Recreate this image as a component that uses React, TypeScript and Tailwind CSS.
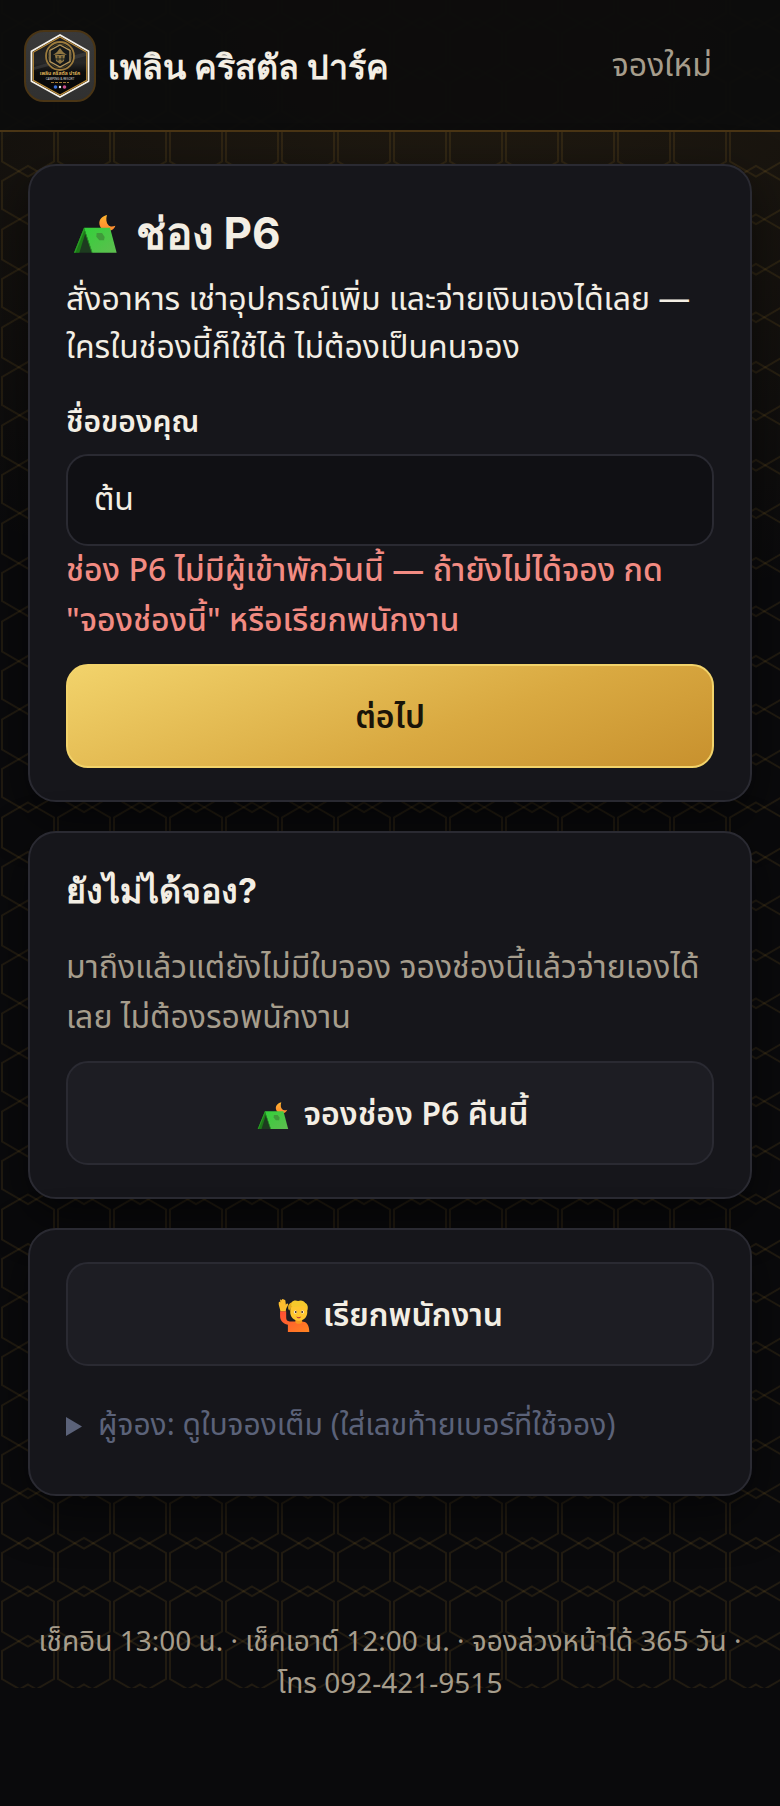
import { useState } from "react";
import type { ReactNode } from "react";

const BODY_FONT = "font-['Noto_Sans_Thai','Noto_Sans',sans-serif]";
const HEAD_FONT = "font-['Inter','Noto_Sans',sans-serif]";

/* ── พื้นหลังลายรังผึ้ง ── */
function HexBackground() {
  return (
    <div
      aria-hidden="true"
      className="absolute inset-x-0 top-0 h-[1688px] overflow-hidden bg-[radial-gradient(120%_620px_at_60%_0px,rgba(205,150,50,0.13),transparent)]"
    >
      <svg className="w-full h-full" fill="none">
        <defs>
          <pattern id="hex" width="56" height="98" patternUnits="userSpaceOnUse">
            <g transform="scale(2)" stroke="#c8922e" strokeOpacity="0.12">
              <path d="M14 9.25l13 7.5v15l-13 7.5-13-7.5v-15z" />
              <path d="M1 50v-8.5l13-7.5 13 7.5V50" />
              <path d="M1-1v7.5L14 14l13-7.5V-1" />
            </g>
          </pattern>
        </defs>
        <rect width="100%" height="100%" fill="url(#hex)" />
      </svg>
    </div>
  );
}

/* ── โลโก้ ── */
function Logo() {
  return (
    <svg viewBox="0 0 72 72" className="w-18 h-18 shrink-0" aria-hidden="true">
      <defs>
        <linearGradient id="logoBg" x1="0" y1="0" x2="0" y2="1">
          <stop offset="0" stopColor="#3a3a3a" />
          <stop offset="1" stopColor="#303030" />
        </linearGradient>
        <linearGradient id="logoHex" x1="0" y1="0" x2="0" y2="1">
          <stop offset="0" stopColor="#1c1c1c" />
          <stop offset="0.45" stopColor="#262626" />
          <stop offset="0.6" stopColor="#0c0c0c" />
          <stop offset="1" stopColor="#050505" />
        </linearGradient>
      </defs>
      <rect x="1" y="1" width="70" height="70" rx="19" fill="url(#logoBg)" stroke="#4a3515" strokeWidth="2" />
      <path d="M36 5l28.5 16.3v30L36 67 7.5 51.3v-30z" fill="url(#logoHex)" stroke="#f7f3ea" strokeWidth="1.8" strokeLinejoin="round" />
      <path d="M36 7l26.7 15.3v28L36 65 9.3 50.3v-28z" fill="none" stroke="#b98a38" strokeWidth="1.2" />
      <path d="M10 37L62 22v4L10 40z" fill="#5a5a5a" opacity="0.35" />
      <circle cx="36" cy="26" r="14" fill="#14181a" stroke="#9b7a3c" strokeWidth="1.8" />
      <circle cx="36" cy="26" r="11.8" fill="none" stroke="#5c4f30" strokeWidth="0.8" />
      <path d="M36 15l10 5.5v11L36 37l-10-5.5v-11z" fill="none" stroke="#b6965a" strokeWidth="1.3" />
      <path d="M36 18l3 4 4 3-7-1-7 1 4-3zM31 25h10l-1 6-4 3-4-3z" fill="#8f7642" />
      <path d="M34 26v5M38 26v5M30 29h12" stroke="#1b2220" strokeWidth="1" />
      <text x="36" y="45" textAnchor="middle" fontSize="5" fontWeight="700" fill="#d9ac55">เพลิน คริสตัล ปาร์ค</text>
      <text x="36" y="50" textAnchor="middle" fontSize="3" fill="#d8d8d8">CAMPING &amp; RESORT</text>
      <path d="M27 52.5h18" stroke="#a07a38" strokeWidth="1" strokeDasharray="3 1" />
      <circle cx="31.5" cy="57" r="1.8" fill="#3b6fd6" />
      <circle cx="36" cy="57" r="1.2" fill="#e8e8e8" />
      <circle cx="40.5" cy="57" r="1.8" fill="#c9508c" />
    </svg>
  );
}

function TentIcon({ className }: { className: string }) {
  return (
    <svg viewBox="18 25 168 128" className={className} aria-hidden="true">
      <defs>
        <linearGradient id="moon" x1="0" y1="0" x2="0" y2="1">
          <stop offset="0" stopColor="#ffb52e" />
          <stop offset="1" stopColor="#ff8430" />
        </linearGradient>
        <linearGradient id="tent" x1="0" y1="0" x2="1" y2="1">
          <stop offset="0" stopColor="#33d13a" />
          <stop offset="1" stopColor="#5fbd50" />
        </linearGradient>
      </defs>
      <path d="M141 34c-14 3-23 13-23 24 0 13 11 24 24 24 11 0 21-6 24-16-9 4-17 3-21-2-6-6-8-17-4-30z" fill="url(#moon)" />
      <path d="M72 72l-30 75h54z" fill="#1d3b1f" />
      <path d="M72 72l-30 75h16l18-58z" fill="#1c7a17" />
      <path d="M72 72h78l20 75H97z" fill="url(#tent)" />
      <path d="M72 72l-30 75h4l27-66 22 66h3z" fill="#2a9c27" />
      <path d="M110 88h16l8 12-2 10h-14l-9-11z" fill="#3f9a3a" />
    </svg>
  );
}

function RaiseHandIcon({ className }: { className: string }) {
  return (
    <svg viewBox="22 20 100 110" className={className} aria-hidden="true">
      <defs>
        <linearGradient id="shirt" x1="0" y1="0" x2="1" y2="1">
          <stop offset="0" stopColor="#ff4d35" />
          <stop offset="1" stopColor="#ff8420" />
        </linearGradient>
      </defs>
      <path d="M31 62h18v18c0 9 6 12 13 12h32c15 0 23 9 23 31H54v-21C38 98 31 88 31 76z" fill="url(#shirt)" />
      <path d="M32 62c-1-9-6-17-5-25 0-4 4-4 5-1l-1-6c0-4 4-4 5 0l1-3c2-2 5-1 5 2l1-1c3-1 4 2 4 5l1 10c2-4 6-5 7-2-1 6-7 10-7 21z" fill="#ffbe2e" />
      <path d="M76 84h20v10c-4 6-16 6-20 0z" fill="#f59a1e" />
      <path d="M61 52c0-12 10-18 25-18s25 6 25 18v13c0 14-10 25-25 25S61 79 61 65z" fill="#ffc62f" />
      <path d="M58 60c-5-11-2-21 7-24 4-7 14-7 19-4 9-4 18 0 21 6 8 4 9 13 6 22-2-8-7-12-12-14-10 3-22 4-32 2-5 3-8 6-9 12z" fill="#f5c92c" />
      <path d="M58 60c-5-11-2-21 7-24-2 8-1 13 2 13-5 3-8 5-9 11z" fill="#e5a91c" />
      <ellipse cx="76" cy="64" rx="4" ry="4.5" fill="#fff" />
      <ellipse cx="97" cy="64" rx="4" ry="4.5" fill="#fff" />
      <circle cx="77" cy="64" r="2.8" fill="#4a2b16" />
      <circle cx="96" cy="64" r="2.8" fill="#4a2b16" />
      <path d="M79 77c4 3 10 3 14 0-2 7-12 7-14 0z" fill="#b8273c" />
    </svg>
  );
}

function Card({ children }: { children: ReactNode }) {
  return (
    <section className="rounded-[28px] border-2 border-[#2a2a32] bg-[#16161b] px-9 py-8 shadow-[0_16px_48px_rgba(0,0,0,0.5)]">
      {children}
    </section>
  );
}

function GhostButton({ icon, children }: { icon: ReactNode; children: ReactNode }) {
  return (
    <button
      type="button"
      className="flex h-26 w-full items-center justify-center gap-3 rounded-[22px] border-2 border-[#2a2a32] bg-[#1d1d23] pt-1 text-[32px] font-semibold"
    >
      {icon}
      <span>{children}</span>
    </button>
  );
}

export default function App() {
  const [name, setName] = useState("ต้น");

  return (
    <div className={`relative min-h-screen bg-[#0a0a0c] text-[#f3eee4] ${BODY_FONT}`}>
      <HexBackground />

      <header className="relative flex items-center justify-between border-b-2 border-[#4a3515] bg-[#0c0c0c]/97 px-6 pt-[30px] pb-7">
        <div className="flex items-center gap-3">
          <Logo />
          <span className={`text-[34px] font-bold ${HEAD_FONT}`}>เพลิน คริสตัล ปาร์ค</span>
        </div>
        <a href="#booking" className="px-11 text-[32px] text-[#a69d8c]">จองใหม่</a>
      </header>

      <main className="relative flex flex-col gap-[29px] px-7 pt-8">
        <Card>
          <h1 className={`mb-2 flex h-[70px] items-center gap-[14px] text-[44px] font-bold ${HEAD_FONT}`}>
            <TentIcon className="w-14" />
            <span>ช่อง P6</span>
          </h1>
          <p className="text-[32px] leading-[48px]">
            สั่งอาหาร เช่าอุปกรณ์เพิ่ม และจ่ายเงินเองได้เลย — ใครในช่องนี้ก็ใช้ได้ ไม่ต้องเป็นคนจอง
          </p>

          <label htmlFor="guest-name" className="mt-6 block text-[30px] font-semibold leading-[54px]">
            ชื่อของคุณ
          </label>
          <input
            id="guest-name"
            type="text"
            value={name}
            onChange={(e) => setName(e.target.value)}
            className="mt-1 block h-23 w-full rounded-[22px] border-2 border-[#2a2a32] bg-[#101014] px-[26px] text-[32px] outline-none focus:border-[#d9a941]"
          />
          <p role="alert" className="text-[32px] font-medium leading-[50px] text-[#f28b82]">
            ช่อง P6 ไม่มีผู้เข้าพักวันนี้ — ถ้ายังไม่ได้จอง กด "จองช่องนี้" หรือเรียกพนักงาน
          </p>
          <button
            type="button"
            className="mt-[18px] h-26 w-full rounded-[22px] border-2 border-[#f2d36b] bg-[linear-gradient(160deg,#f2d36b,#d9a941_60%,#c8912e)] pt-1 text-[32px] font-semibold text-[#1a1408]"
          >
            ต่อไป
          </button>
        </Card>

        <Card>
          <h2 className={`text-[34px] font-bold leading-[52px] ${HEAD_FONT}`}>ยังไม่ได้จอง?</h2>
          <p className="mt-[26px] mb-[18px] text-[32px] leading-[50px] text-[#a69d8c]">
            มาถึงแล้วแต่ยังไม่มีใบจอง จองช่องนี้แล้วจ่ายเองได้เลย ไม่ต้องรอพนักงาน
          </p>
          <GhostButton icon={<TentIcon className="w-10" />}>จองช่อง P6 คืนนี้</GhostButton>
        </Card>

        <Card>
          <GhostButton icon={<RaiseHandIcon className="w-[34px]" />}>เรียกพนักงาน</GhostButton>
          <details className="pt-[30px] pb-[6px] text-[30px] leading-[60px] text-[#5b6279]">
            <summary className="flex cursor-pointer list-none items-center gap-4">
              <svg viewBox="0 0 16 19" className="w-4" aria-hidden="true">
                <path d="M0 0l16 9.5L0 19z" fill="currentColor" />
              </svg>
              ผู้จอง: ดูใบจองเต็ม (ใส่เลขท้ายเบอร์ที่ใช้จอง)
            </summary>
          </details>
        </Card>
      </main>

      <footer className="relative px-8 pt-[126px] pb-24 text-center text-[28px] leading-[42px] text-[#a69d8c]">
        เช็คอิน 13:00 น. · เช็คเอาต์ 12:00 น. · จองล่วงหน้าได้ 365 วัน · โทร 092-421-9515
      </footer>
    </div>
  );
}
